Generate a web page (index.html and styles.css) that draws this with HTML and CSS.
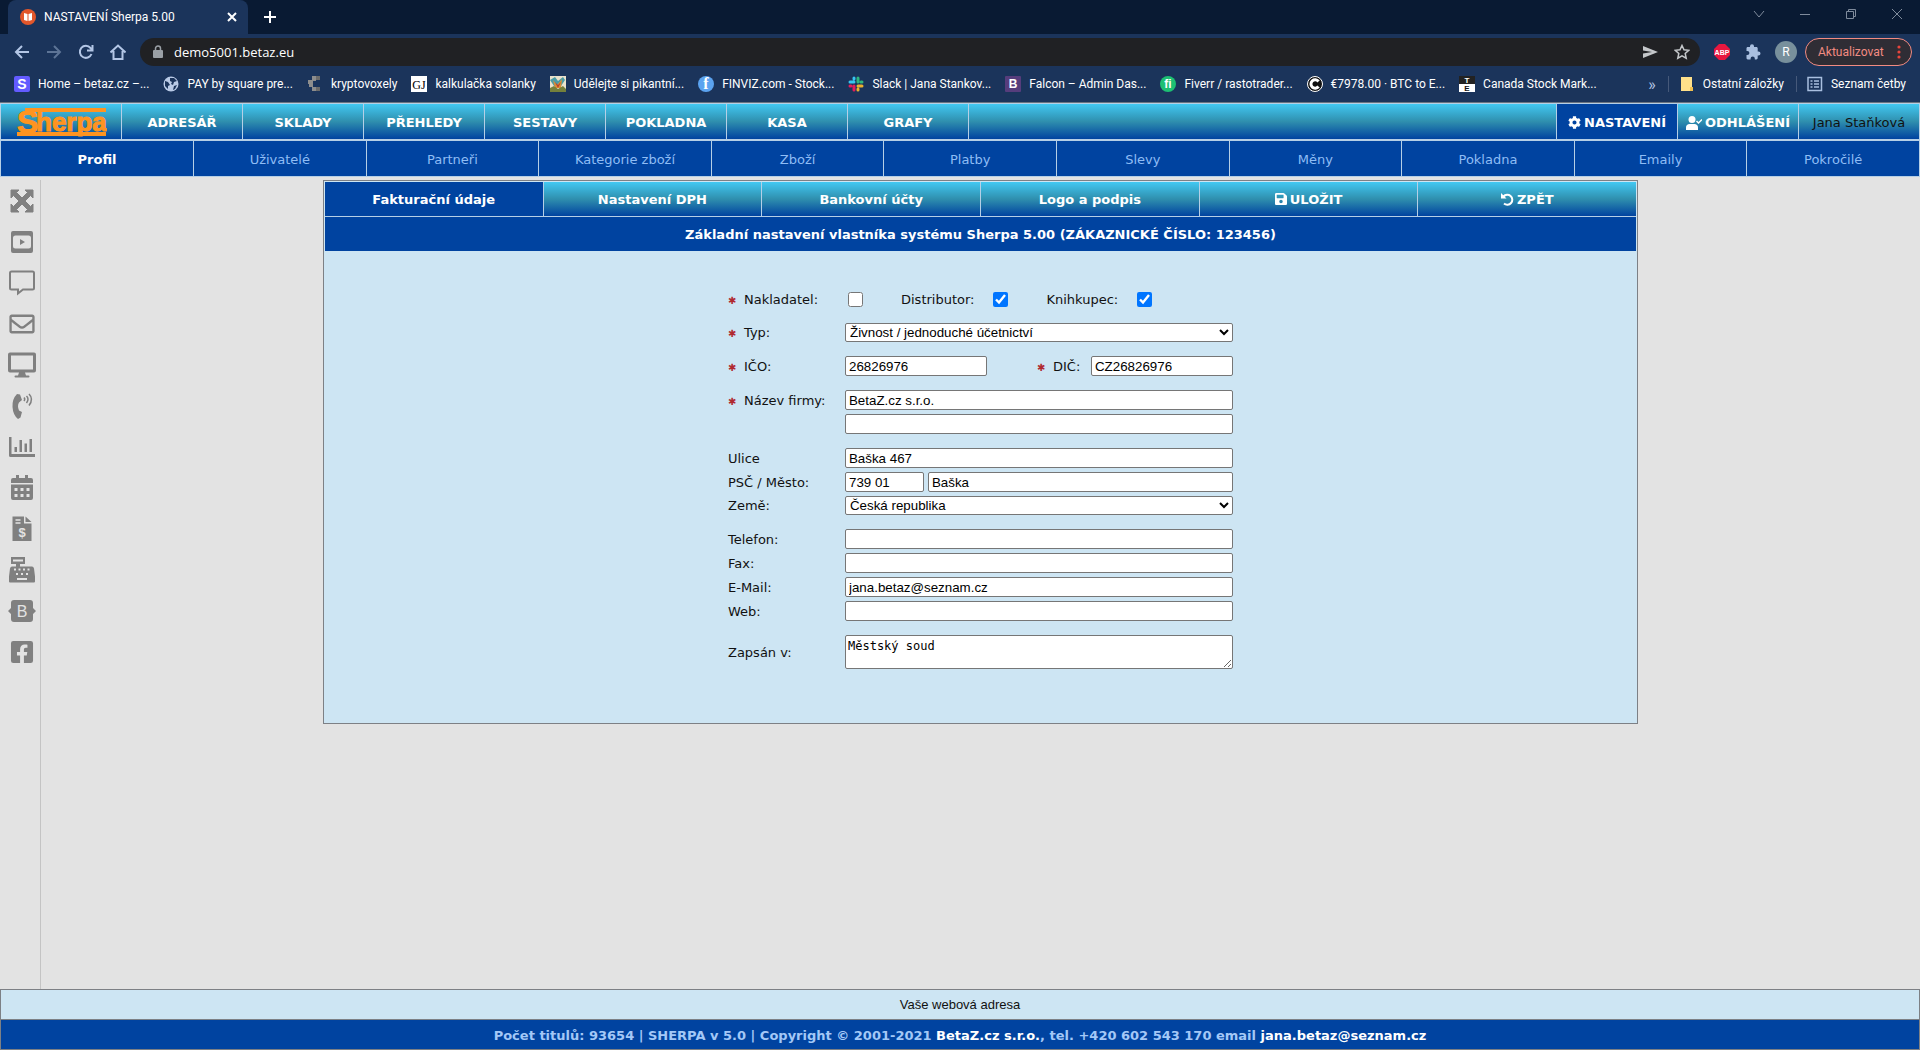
FILE: index.html
```html
<!DOCTYPE html>
<html lang="cs">
<head>
  <meta charset="UTF-8">
  <meta name="viewport" content="width=device-width, initial-scale=1.0">
  <title>NASTAVENÍ Sherpa 5.00</title>
  <link rel="stylesheet" href="styles.css">
</head>
<body>

  <!-- browser -->
  <div class="browser">
    <div class="tabstrip">
      <div class="tab">
        <svg class="ico16" viewBox="0 0 16 16"><circle cx="8" cy="8" r="8" fill="#e2572b"/><path d="M4 4l3.500 1v7L4 11zM12 4L8.500 5v7l3.500-1z" fill="#fff"/></svg>
        <span class="tab-title">NASTAVENÍ Sherpa 5.00</span>
        <button class="plain" aria-label="Zavřít kartu"><svg width="10" height="10" viewBox="0 0 10 10"><path d="M1 1l8 8M9 1L1 9" stroke="#fff" stroke-width="2"/></svg></button>
      </div>
      <button class="plain new-tab" aria-label="Nová karta"><svg width="12" height="12" viewBox="0 0 12 12"><path d="M6 0v12M0 6h12" stroke="#fff" stroke-width="2"/></svg></button>
      <div class="win-controls">
        <button class="plain" aria-label="Karty"><svg width="12" height="12" viewBox="0 0 12 12"><path d="M1 3l5 6 5-6"/></svg></button>
        <button class="plain" aria-label="Minimalizovat"><svg width="12" height="12" viewBox="0 0 12 12"><path d="M1 6.500h10"/></svg></button>
        <button class="plain" aria-label="Obnovit"><svg width="12" height="12" viewBox="0 0 12 12"><path d="M1.500 3.500h7v7h-7zM3.500 3V1.500h7v7H9"/></svg></button>
        <button class="plain" aria-label="Zavřít"><svg width="12" height="12" viewBox="0 0 12 12"><path d="M1 1l10 10M11 1L1 11"/></svg></button>
      </div>
    </div>

    <div class="toolbar">
      <button class="plain tool" aria-label="Zpět"><svg class="ico16" viewBox="0 0 16 16"><path d="M15 8H2M8 2L2 8l6 6"/></svg></button>
      <button class="plain tool dim" aria-label="Vpřed"><svg class="ico16" viewBox="0 0 16 16"><path d="M1 8h13M8 2l6 6-6 6"/></svg></button>
      <button class="plain tool" aria-label="Obnovit stránku"><svg class="ico16" viewBox="0 0 16 16"><path d="M13.500 10A6 6 0 1 1 12.500 4l1.500 2M14.500 1v5.500H9"/></svg></button>
      <button class="plain tool" aria-label="Domů"><svg class="ico16" viewBox="0 0 16 16"><path d="M.5 8.500L8 1.500l7.500 7M3.500 7v8h9V7"/></svg></button>
      <div class="address">
        <svg width="10" height="14" viewBox="0 0 10 14"><rect y="5" width="10" height="8" rx="1" fill="#9aa0a6"/><path d="M2.500 6V3.500a2.500 2.500 0 0 1 5 0V6" fill="none" stroke="#9aa0a6" stroke-width="1.500"/></svg>
        <input type="text" value="demo5001.betaz.eu" aria-label="Adresa">
        <svg class="ico16" viewBox="0 0 16 16"><path d="M1 2l15 6-15 6V9.500L10 8 1 6.500z" fill="#c4c7ca"/></svg>
        <svg class="ico16" viewBox="0 0 16 16"><path d="M8 1.500l2 4.300 4.700.5-3.500 3.200 1 4.700L8 11.800l-4.200 2.400 1-4.700L1.300 6.300 6 5.800z" fill="none" stroke="#c4c7ca" stroke-width="1.500"/></svg>
      </div>
      <svg class="ico16" viewBox="0 0 16 16"><path d="M5 0h6l5 5v6l-5 5H5l-5-5V5z" fill="#e8173f"/><text class="abp" x="8" y="11" text-anchor="middle">ABP</text></svg>
      <svg class="ico16" viewBox="0 0 16 16"><path d="M12.500 7.500h-.8V4.300c0-.7-.6-1.300-1.300-1.300H8V2.300a2 2 0 0 0-4 0V3H1.800C1 3 .5 3.600.5 4.300v2.600h.8a2 2 0 0 1 0 4.200H.5v3c0 .8.500 1.400 1.300 1.400h2.800v-.9a2 2 0 0 1 4.200 0v.9h1.600c.7 0 1.300-.6 1.300-1.400V11.500h.8a2 2 0 0 0 0-4z" fill="#a9bfe0"/></svg>
      <span class="avatar">R</span>
      <button class="update">Aktualizovat <svg width="4" height="14" viewBox="0 0 4 14"><circle cx="2" cy="2" r="1.600"/><circle cx="2" cy="7" r="1.600"/><circle cx="2" cy="12" r="1.600"/></svg></button>
    </div>

    <div class="bookmarks">
      <a href="#"><svg class="ico16" viewBox="0 0 16 16"><rect width="16" height="16" rx="2" fill="#635bff"/><text class="fav" x="8" y="13" text-anchor="middle">S</text></svg>Home – betaz.cz –...</a>
      <a href="#"><svg class="ico16" viewBox="0 0 16 16"><circle cx="8" cy="8" r="7.500" fill="#b9cae6"/><path d="M2 5l3 1 2 3-2 1v3L2 10zM7 2h4l3 3-3 1-1 3-2-1 1-2-2-1zM11 10l3-1-2 4-2 1z" fill="#1b345b"/></svg>PAY by square pre...</a>
      <a href="#"><svg class="ico16" viewBox="0 0 16 16"><path d="M5 0h8v4H9v1H5zM1 4h5v4H1zM2 8h4v3H2zM5 11h7v4H5z" fill="#8d8d8d"/><path d="M9 0h4v4H9zM9 11h4v4H9z" fill="#6b6b6b"/></svg>kryptovoxely</a>
      <a href="#"><svg class="ico16" viewBox="0 0 16 16"><rect width="16" height="16" fill="#fff"/><text class="fav serif" x="8" y="13" text-anchor="middle">GJ</text></svg>kalkulačka solanky</a>
      <a href="#"><svg class="ico16" viewBox="0 0 16 16"><rect width="16" height="16" fill="#e9e2cc"/><path d="M0 4l5-3 3 4 5-4 2 3-4 6H4z" fill="#4a9ca6"/><path d="M3 4l4 5 5-6-1 9H5z" fill="#d98e35"/><path d="M0 12l4-2 4 3 5-3 3 3v3H0z" fill="#74803b"/><path d="M5 6l3 3 3-3-3 6z" fill="#b7402d"/></svg>Udělejte si pikantní...</a>
      <a href="#"><svg class="ico16" viewBox="0 0 16 16"><circle cx="8" cy="8" r="8" fill="#5ba3f0"/><text class="fav serif-bold" x="8" y="13" text-anchor="middle">f</text></svg>FINVIZ.com - Stock...</a>
      <a href="#"><svg class="ico16" viewBox="0 0 16 16" fill="none" stroke-width="3" stroke-linecap="round"><path d="M6 2v1M2 6h4" stroke="#36c5f0"/><path d="M10 2v4M14 6h-1" stroke="#2eb67d"/><path d="M10 14v-1M10 10h4" stroke="#ecb22e"/><path d="M6 10v4M2 10h1" stroke="#e01e5a"/></svg>Slack | Jana Stankov...</a>
      <a href="#"><svg class="ico16" viewBox="0 0 16 16"><rect width="16" height="16" rx="1" fill="#563d7c"/><text class="fav light" x="8" y="12" text-anchor="middle">B</text></svg>Falcon – Admin Das...</a>
      <a href="#"><svg class="ico16" viewBox="0 0 16 16"><circle cx="8" cy="8" r="8" fill="#1dbf73"/><text class="fav light" x="8" y="12" text-anchor="middle">fi</text></svg>Fiverr / rastotrader...</a>
      <a href="#"><svg class="ico16" viewBox="0 0 16 16"><circle cx="8" cy="8" r="7.500" fill="#111" stroke="#fff"/><path d="M11.500 5.500a4.200 4.200 0 1 0 0 5" fill="none" stroke="#fff" stroke-width="3"/><circle cx="8" cy="8" r="1.500" fill="#111"/></svg>€7978.00 · BTC to E...</a>
      <a href="#"><svg class="ico16" viewBox="0 0 16 16"><rect width="16" height="8" fill="#222"/><rect y="8" width="16" height="8" fill="#fff"/><text class="fav tiny" x="8" y="7" text-anchor="middle">T</text><text class="fav tiny dark" x="8" y="15" text-anchor="middle">E</text></svg>Canada Stock Mark...</a>
      <span class="more">»</span>
      <a href="#" class="divided"><svg class="ico16" viewBox="0 0 16 16"><path d="M2 1h11v10h1v4H2z" fill="#ffe08a"/><path d="M11 11h3v4h-3z" fill="#f1c04f"/></svg>Ostatní záložky</a>
      <a href="#" class="divided"><svg class="ico16" viewBox="0 0 16 16"><path d="M1 1.500h13.500v13H1zM3.500 5h2M3.500 8h2M3.500 11h2M7 5h5M7 8h5M7 11h5" fill="none" stroke="#a9bfe0" stroke-width="1.500"/></svg>Seznam četby</a>
    </div>
  </div>

  <!-- hlavní menu -->
  <nav class="mainmenu">
    <a href="#" class="logo" aria-label="Sherpa">
      <svg width="92" height="35" viewBox="0 -3 92 35" fill="#ff9420">
        <rect x="10" y="1" width="81" height="4"/>
        <rect x="2" y="25" width="89" height="4"/>
        <text class="logo-s" x="2" y="26">S</text>
        <text class="logo-rest" x="21" y="24">herpa</text>
      </svg>
    </a>
    <a href="#">ADRESÁŘ</a>
    <a href="#">SKLADY</a>
    <a href="#">PŘEHLEDY</a>
    <a href="#">SESTAVY</a>
    <a href="#">POKLADNA</a>
    <a href="#">KASA</a>
    <a href="#">GRAFY</a>
    <span class="filler"></span>
    <a href="#" class="active"><svg width="13" height="13" viewBox="0 0 512 512"><path d="M487.400 315.700l-42.600-24.600c4.300-23.200 4.300-47 0-70.200l42.600-24.600c4.900-2.800 7.100-8.600 5.500-14-11.100-35.600-30-67.800-54.700-94.600-3.800-4.100-10-5.100-14.800-2.300L380.800 110c-17.900-15.400-38.500-27.300-60.800-35.100V25.800c0-5.600-3.900-10.500-9.400-11.700-36.700-8.200-74.300-7.800-109.200 0-5.500 1.200-9.400 6.100-9.400 11.700V75c-22.200 7.900-42.800 19.800-60.800 35.100L88.700 85.500c-4.900-2.800-11-1.900-14.800 2.300-24.700 26.700-43.600 58.900-54.700 94.600-1.700 5.400.6 11.200 5.500 14L67.300 221c-4.300 23.200-4.300 47 0 70.200l-42.600 24.600c-4.900 2.800-7.100 8.600-5.500 14 11.100 35.600 30 67.800 54.700 94.600 3.800 4.100 10 5.100 14.800 2.300l42.600-24.600c17.900 15.400 38.500 27.300 60.800 35.100v49.200c0 5.600 3.900 10.500 9.400 11.700 36.700 8.200 74.300 7.800 109.200 0 5.500-1.200 9.400-6.100 9.400-11.700v-49.200c22.200-7.900 42.800-19.800 60.800-35.100l42.600 24.600c4.900 2.800 11 1.900 14.800-2.300 24.700-26.700 43.600-58.900 54.700-94.600 1.500-5.500-.7-11.300-5.600-14.100zM256 336c-44.100 0-80-35.900-80-80s35.900-80 80-80 80 35.900 80 80-35.900 80-80 80z"/></svg>NASTAVENÍ</a>
    <a href="#"><svg width="16" height="14" viewBox="0 0 16 14"><circle cx="6" cy="3.500" r="3.500"/><path d="M0 14v-2.500C0 9.500 1.500 8 3.500 8h5c2 0 3.500 1.500 3.500 3.500V14z"/><path d="M10.500 5l2 2L16 3.500" fill="none" stroke="#fff" stroke-width="1.500"/></svg>ODHLÁŠENÍ</a>
    <span class="user">Jana Staňková</span>
  </nav>

  <nav class="submenu">
    <a href="#" class="active">Profil</a>
    <a href="#">Uživatelé</a>
    <a href="#">Partneři</a>
    <a href="#">Kategorie zboží</a>
    <a href="#">Zboží</a>
    <a href="#">Platby</a>
    <a href="#">Slevy</a>
    <a href="#">Měny</a>
    <a href="#">Pokladna</a>
    <a href="#">Emaily</a>
    <a href="#">Pokročilé</a>
  </nav>

  <div class="content">
    <aside class="sidebar">
      <a href="#" aria-label="Celá obrazovka"><svg viewBox="0 0 28 28"><path d="M3 3h8L8.500 5.500 14 11l5.500-5.500L17 3h8v8l-2.500-2.500L17 14l5.500 5.500L25 17v8h-8l2.500-2.500L14 17l-5.500 5.500L11 25H3v-8l2.500 2.500L11 14 5.500 8.500 3 11z" stroke="#808080" stroke-linejoin="round"/></svg></a>
      <a href="#" aria-label="Video"><svg viewBox="0 0 28 28" fill-rule="evenodd"><path d="M5 3h18a2 2 0 0 1 2 2v18a2 2 0 0 1-2 2H5a2 2 0 0 1-2-2V5a2 2 0 0 1 2-2zM7.500 7.500Q5 7.500 5 10v8q0 2.500 2.500 2.500h13Q23 20.500 23 18v-8q0-2.500-2.500-2.500zM12 11l5 3-5 3z"/></svg></a>
      <a href="#" aria-label="Zprávy"><svg viewBox="0 0 28 28"><path d="M3.500 2.500h21q1.500 0 1.500 1.500v15q0 1.500-1.500 1.500H15l-5 4v-4H3.500Q2 20.500 2 19V4q0-1.500 1.500-1.500z" fill="none" stroke="#808080" stroke-width="2"/></svg></a>
      <a href="#" aria-label="Pošta"><svg viewBox="-28 -28 568 568"><path d="M464 64H48C21.490 64 0 85.490 0 112v288c0 26.510 21.490 48 48 48h416c26.510 0 48-21.490 48-48V112c0-26.510-21.490-48-48-48zm0 48v40.805c-22.422 18.259-58.168 46.651-134.587 106.490-16.841 13.247-50.201 45.072-73.413 44.701-23.208.375-56.579-31.459-73.413-44.701C106.180 199.465 70.425 171.067 48 152.805V112h416zM48 400V214.398c22.914 18.251 55.409 43.862 104.938 82.646 21.857 17.205 60.134 55.186 103.062 54.955 42.717.231 80.509-37.199 103.053-54.947 49.528-38.783 82.032-64.401 104.947-82.653V400H48z"/></svg></a>
      <a href="#" aria-label="Obrazovka"><svg viewBox="0 0 28 28" fill-rule="evenodd"><path d="M2 1.500h24a2 2 0 0 1 2 2v16a2 2 0 0 1-2 2h-9l1 3h2.500a1 1 0 0 1 0 2h-13a1 1 0 0 1 0-2H10l1-3H2a2 2 0 0 1-2-2v-16a2 2 0 0 1 2-2zM3 4.500v14h22v-14z"/></svg></a>
      <a href="#" aria-label="Telefon"><svg viewBox="0 0 28 28"><path d="M9 2l3 .5L14 8l-3 2.500q-2 3.500 0 8L14 20l-1.500 5.500L10 27Q5 23 4.500 15T9 2z"/><path d="M16 5.500q1.500 1.500 0 3.500M18.500 4q3 3 0 7M21 2q5 5 0 11.500" fill="none" stroke="#808080" stroke-width="1.500"/></svg></a>
      <a href="#" aria-label="Grafy"><svg viewBox="0 0 28 28"><path d="M1 4h2.500v17H27v3H2.500Q1 24 1 22.500zM6.500 14H9v5H6.500zM11.500 7H14v12h-2.500zM16.500 10.500H19V19h-2.500zM21.500 6H24v13h-2.500z"/></svg></a>
      <a href="#" aria-label="Kalendář"><svg viewBox="0 0 28 28" fill-rule="evenodd"><path d="M8 1h3v3h6V1h3v3h3a2 2 0 0 1 2 2v3H3V6a2 2 0 0 1 2-2h3zM3 10.500h22V24a2 2 0 0 1-2 2H5a2 2 0 0 1-2-2zM6.500 14v3h3v-3zm6 0v3h3v-3zm6 0v3h3v-3zm-12 6v3h3v-3zm6 0v3h3v-3zm6 0v3h3v-3z"/></svg></a>
      <a href="#" aria-label="Faktury"><svg viewBox="0 0 28 28"><path d="M4.500 1.500H16v7h7.500V26h-19z"/><path d="M17.500 1.500l6 5.500h-6z"/><path d="M7.500 5h5M7.500 8h5" stroke="#e3e3e3" stroke-width="1.500"/><text class="glyph-dollar" x="14" y="22" text-anchor="middle">$</text></svg></a>
      <a href="#" aria-label="Pokladna"><svg viewBox="0 0 28 28" fill-rule="evenodd"><path d="M3 1h14v7h-5v2.500h12q1.500 0 2 2l1 8v5q0 1-1 1H2q-1 0-1-1v-5l1-8q.5-2 2-2h4V8H3zM5 3.500v2h10v-2zM6 12.500v2h2v-2zm4.500 0v2h2v-2zm4.500 0v2h2v-2zm4.500 0v2h2v-2zM8 17v2h2v-2zm5 0v2h2v-2zm5 0v2h2v-2zM9 22v2h10v-2z"/></svg></a>
      <a href="#" aria-label="Bootstrap"><svg viewBox="0 0 28 28"><path d="M6 3h16q3 0 3 3v5l3 3-3 3v5q0 3-3 3H6q-3 0-3-3v-5l-3-3 3-3V6q0-3 3-3z"/><text class="glyph-b" x="14" y="20" text-anchor="middle">B</text></svg></a>
      <a href="#" aria-label="Facebook"><svg viewBox="-60 -28 568 568"><path d="M400 32H48A48 48 0 0 0 0 80v352a48 48 0 0 0 48 48h137.250V327.690h-63V256h63v-54.640c0-62.150 37-96.480 93.670-96.480 27.140 0 55.520 4.840 55.520 4.840v61h-31.270c-30.810 0-40.420 19.120-40.420 38.730V256h68.780l-11 71.690h-57.780V480H400a48 48 0 0 0 48-48V80a48 48 0 0 0-48-48z"/></svg></a>
    </aside>

    <main>
      <form class="panel">
        <div class="tabs">
          <button type="button" class="active">Fakturační údaje</button>
          <button type="button">Nastavení DPH</button>
          <button type="button">Bankovní účty</button>
          <button type="button">Logo a podpis</button>
          <button type="button"><svg width="12" height="14" viewBox="0 0 448 512"><path d="M433.941 129.941l-83.882-83.882A48 48 0 0 0 316.118 32H48C21.490 32 0 53.490 0 80v352c0 26.510 21.490 48 48 48h352c26.510 0 48-21.490 48-48V163.882a48 48 0 0 0-14.059-33.941zM224 416c-35.346 0-64-28.654-64-64 0-35.346 28.654-64 64-64s64 28.654 64 64c0 35.346-28.654 64-64 64zm96-304.520V212c0 6.627-5.373 12-12 12H76c-6.627 0-12-5.373-12-12V108c0-6.627 5.373-12 12-12h228.520c3.183 0 6.235 1.264 8.485 3.515l3.480 3.480A11.996 11.996 0 0 1 320 111.480z"/></svg>ULOŽIT</button>
          <button type="button"><svg width="13" height="13" viewBox="0 0 13 13"><path d="M2.500 3.500A5 5 0 1 1 3 10.500" fill="none" stroke="#fff" stroke-width="2"/><path d="M0 0l2 2 3.500 3.500H0z"/></svg>ZPĚT</button>
        </div>
        <h1>Základní nastavení vlastníka systému Sherpa 5.00 (ZÁKAZNICKÉ ČÍSLO: 123456)</h1>

        <div class="fields">
          <div class="row group">
            <label for="nakladatel" class="req">Nakladatel:</label>
            <div class="checks">
              <input type="checkbox" id="nakladatel">
              <label for="distributor">Distributor:</label>
              <input type="checkbox" id="distributor" checked>
              <label for="knihkupec">Knihkupec:</label>
              <input type="checkbox" id="knihkupec" checked>
            </div>
          </div>
          <div class="row group">
            <label for="typ" class="req">Typ:</label>
            <select id="typ"><option>Živnost / jednoduché účetnictví</option></select>
          </div>
          <div class="row group">
            <label for="ico" class="req">IČO:</label>
            <input type="text" id="ico" class="half" value="26826976">
            <label for="dic" class="req dic">DIČ:</label>
            <input type="text" id="dic" class="half" value="CZ26826976">
          </div>
          <div class="row">
            <label for="nazev" class="req">Název firmy:</label>
            <input type="text" id="nazev" value="BetaZ.cz s.r.o.">
          </div>
          <div class="row group">
            <label for="nazev2"></label>
            <input type="text" id="nazev2" aria-label="Název firmy 2">
          </div>
          <div class="row">
            <label for="ulice">Ulice</label>
            <input type="text" id="ulice" value="Baška 467">
          </div>
          <div class="row">
            <label for="psc">PSČ / Město:</label>
            <input type="text" id="psc" class="zip" value="739 01">
            <input type="text" aria-label="Město" value="Baška">
          </div>
          <div class="row group">
            <label for="zeme">Země:</label>
            <select id="zeme"><option>Česká republika</option></select>
          </div>
          <div class="row">
            <label for="telefon">Telefon:</label>
            <input type="text" id="telefon">
          </div>
          <div class="row">
            <label for="fax">Fax:</label>
            <input type="text" id="fax">
          </div>
          <div class="row">
            <label for="email">E-Mail:</label>
            <input type="text" id="email" value="jana.betaz@seznam.cz">
          </div>
          <div class="row group">
            <label for="web">Web:</label>
            <input type="text" id="web">
          </div>
          <div class="row">
            <label for="zapsan">Zapsán v:</label>
            <textarea id="zapsan" rows="2">Městský soud</textarea>
          </div>
        </div>
      </form>
    </main>
  </div>

  <footer>
    <div class="hint">Vaše webová adresa</div>
    <div class="copyright">Počet titulů: 93654 | SHERPA v 5.0 | Copyright © 2001-2021 <a href="#">BetaZ.cz s.r.o.</a>, tel. +420 602 543 170 email <a href="#">jana.betaz@seznam.cz</a></div>
  </footer>

</body>
</html>
```

FILE: styles.css
```css
* {
  box-sizing: border-box;
}
body {
  margin: 0;
  min-height: 100vh;
  display: flex;
  flex-direction: column;
  background: #e3e3e3;
  font-family: Verdana, "DejaVu Sans", sans-serif;
  font-size: 13px;
  color: #111;
}
a {
  color: inherit;
  text-decoration: none;
}
.plain {
  display: flex;
  align-items: center;
  justify-content: center;
  border: none;
  padding: 0;
  background: none;
}
.ico16 {
  width: 16px;
  height: 16px;
  flex: none;
}

/* browser */
.browser {
  background: #1b345b;
  color: #fff;
  font-family: "Segoe UI", Roboto, sans-serif;
  font-size: 12px;
  border-bottom: 1px solid #6b7480;
}
.tabstrip {
  display: flex;
  align-items: center;
  height: 34px;
  padding-left: 8px;
  background: #091a33;
}
.tab {
  display: flex;
  align-items: center;
  gap: 8px;
  width: 240px;
  height: 34px;
  padding: 0 11px 0 12px;
  background: #1b345b;
  border-radius: 8px 8px 0 0;
}
.tab-title {
  flex: 1;
}
.new-tab {
  margin-left: 16px;
}
.win-controls {
  display: flex;
  gap: 34px;
  margin-left: auto;
  padding: 0 17px 6px 0;
}
.win-controls path {
  fill: none;
  stroke: #7f8b9c;
}
.toolbar {
  display: flex;
  align-items: center;
  gap: 16px;
  height: 36px;
  padding: 0 8px 0 14px;
}
.tool path {
  fill: none;
  stroke: #b3c6e6;
  stroke-width: 2;
}
.tool.dim path {
  stroke: #5d7496;
}
.address {
  display: flex;
  align-items: center;
  flex: 1;
  gap: 16px;
  height: 28px;
  margin: 0 -2px;
  padding: 0 10px 0 13px;
  border-radius: 14px;
  background: #202124;
}
.address input {
  flex: 1;
  margin-left: -5px;
  border: none;
  padding: 0;
  background: none;
  color: #fff;
  font: 13px "Segoe UI", "Open Sans", sans-serif;
}
.abp {
  font: bold 7px "Liberation Sans", sans-serif;
  fill: #fff;
}
.avatar {
  width: 22px;
  height: 22px;
  margin-left: -3px;
  border-radius: 50%;
  background: #78909c;
  line-height: 22px;
  text-align: center;
}
.update {
  display: flex;
  align-items: center;
  justify-content: space-between;
  width: 107px;
  height: 28px;
  margin-left: -8px;
  padding: 0 10px 0 12px;
  border: 1px solid #f28b82;
  border-radius: 14px;
  background: #2f2d35;
  color: #f28b82;
  font: inherit;
}
.update svg {
  fill: #e8453c;
}
.bookmarks {
  display: flex;
  align-items: center;
  gap: 14px;
  height: 32px;
  padding: 0 14px 4px;
  white-space: nowrap;
}
.bookmarks a {
  display: flex;
  align-items: center;
  gap: 8px;
}
.bookmarks .more {
  margin-left: auto;
  font-size: 16px;
  color: #b3c6e6;
}
.bookmarks .divided {
  margin-left: -2px;
  padding-left: 10px;
  border-left: 1px solid #46597a;
}
.fav {
  font: bold 14px "Liberation Sans", sans-serif;
  fill: #fff;
}
.fav.light {
  font-size: 12px;
}
.fav.tiny {
  font-size: 8px;
}
.fav.dark {
  fill: #111;
}
.fav.serif {
  font: 12px "Liberation Serif", serif;
  fill: #000;
}
.fav.serif-bold {
  font: bold 16px "Liberation Serif", serif;
}

/* menu */
.mainmenu, .submenu {
  display: flex;
  height: 37px;
  border: 1px solid #b5cfe6;
}
.mainmenu {
  background: linear-gradient(#42c8f2, #2f8fae 50%, #0043a0);
}
.mainmenu a, .mainmenu span, .submenu a {
  display: flex;
  align-items: center;
  justify-content: center;
  gap: 3px;
  padding-top: 2px;
  border-right: 1px solid #b5cfe6;
  white-space: nowrap;
}
.mainmenu a, .mainmenu span {
  width: 121px;
}
.mainmenu a {
  color: #fff;
  font-weight: bold;
}
.mainmenu svg {
  fill: #fff;
}
.mainmenu .logo {
  padding-top: 0;
}
.mainmenu .logo svg {
  fill: #ff9420;
}
.mainmenu .filler {
  flex: 1;
}
.mainmenu .user {
  width: 120px;
  border-right: none;
}
.mainmenu .active {
  background: #0043a0;
}
.logo-s, .logo-rest {
  stroke: #ff9420;
}
.logo-s {
  font: bold 32px "Liberation Sans", sans-serif;
}
.logo-rest {
  font: bold 26px "Liberation Sans", sans-serif;
}
.submenu {
  background: #0043a0;
  color: #8fbdf5;
}
.submenu a {
  flex: 1;
}
.submenu .active {
  flex: 0 0 193px;
  color: #fff;
  font-weight: bold;
}
.submenu a:last-child {
  border-right: none;
}

.content {
  display: flex;
  flex: 1;
  padding-top: 3px;
}
.sidebar {
  display: flex;
  flex-direction: column;
  gap: 13px;
  width: 41px;
  padding: 7px 4px 0 8px;
  border-right: 1px solid #c4c4c4;
}
.sidebar a {
  height: 28px;
}
.sidebar svg {
  width: 28px;
  height: 28px;
  fill: #808080;
}
.sidebar .glyph-dollar {
  font: bold 13px "Liberation Sans", sans-serif;
  fill: #e3e3e3;
}
.sidebar .glyph-b {
  font: 16px "Liberation Sans", sans-serif;
  fill: #e3e3e3;
}
main {
  flex: 1;
}

/* panel */
.panel {
  width: 70%;
  margin: 0 auto;
  padding: 1px;
  border: 1px solid #7d8085;
  background: #cde5f3;
}
.tabs {
  display: flex;
}
.tabs button {
  display: flex;
  align-items: center;
  justify-content: center;
  gap: 3px;
  flex: 1;
  height: 34px;
  padding: 0;
  border: none;
  border-right: 1px solid #b5cfe6;
  background: linear-gradient(#42c8f2, #2f8fae 50%, #0043a0);
  color: #fff;
  font: inherit;
  font-weight: bold;
}
.tabs button:last-child {
  border-right: none;
}
.tabs .active {
  background: #0043a0;
}
.tabs svg {
  fill: #fff;
}
h1 {
  margin: 0;
  padding-top: 2px;
  border-top: 1px solid #b5cfe6;
  background: #0043a0;
  color: #fff;
  font-size: 13px;
  line-height: 32px;
  text-align: center;
}
.fields {
  width: 505px;
  margin: 0 auto;
  padding: 38px 0 53px;
}
.row {
  display: flex;
  align-items: center;
  gap: 4px;
  margin-bottom: 4px;
}
.row.group {
  margin-bottom: 14px;
}
.row:last-child {
  margin-bottom: 0;
}
.row > label {
  flex: none;
  width: 113px;
}
.req::before {
  content: "✱";
  display: inline-block;
  width: 16px;
  font-size: 10px;
  color: #b02a30;
}
.row > .dic {
  width: 50px;
  margin-left: auto;
}
.row input[type=text], select, textarea {
  flex: 1;
  min-width: 0;
  border: 1px solid #767676;
  border-radius: 2px;
  background: #fff;
  color: #000;
}
.row input[type=text] {
  height: 20px;
  padding: 1px 3px;
  font-family: Arial, "Liberation Sans", sans-serif;
}
.row input.half {
  flex: 0 0 142px;
}
.row input.zip {
  flex: 0 0 79px;
}
select {
  height: 19px;
  padding: 0;
  font-family: Arial, "Liberation Sans", sans-serif;
}
textarea {
  height: 34px;
  padding: 2px;
  font: 12px "DejaVu Sans Mono", monospace;
  line-height: 16px;
}
.checks {
  display: flex;
  align-items: center;
  height: 20px;
}
.checks input {
  width: 15px;
  height: 15px;
  margin: 0 38px 0 3px;
}
.checks label {
  padding-right: 16px;
}

/* footer */
footer {
  border: 1px solid #7d8085;
  text-align: center;
}
.hint {
  background: #cde5f3;
  border-bottom: 1px solid #7d8085;
  color: #111;
  font: 13px/29px Arial, "Liberation Sans", sans-serif;
}
.copyright {
  padding-top: 2px;
  background: #0043a0;
  color: #a3c8f7;
  font-weight: bold;
  line-height: 27px;
}
.copyright a {
  color: #fff;
}
```
